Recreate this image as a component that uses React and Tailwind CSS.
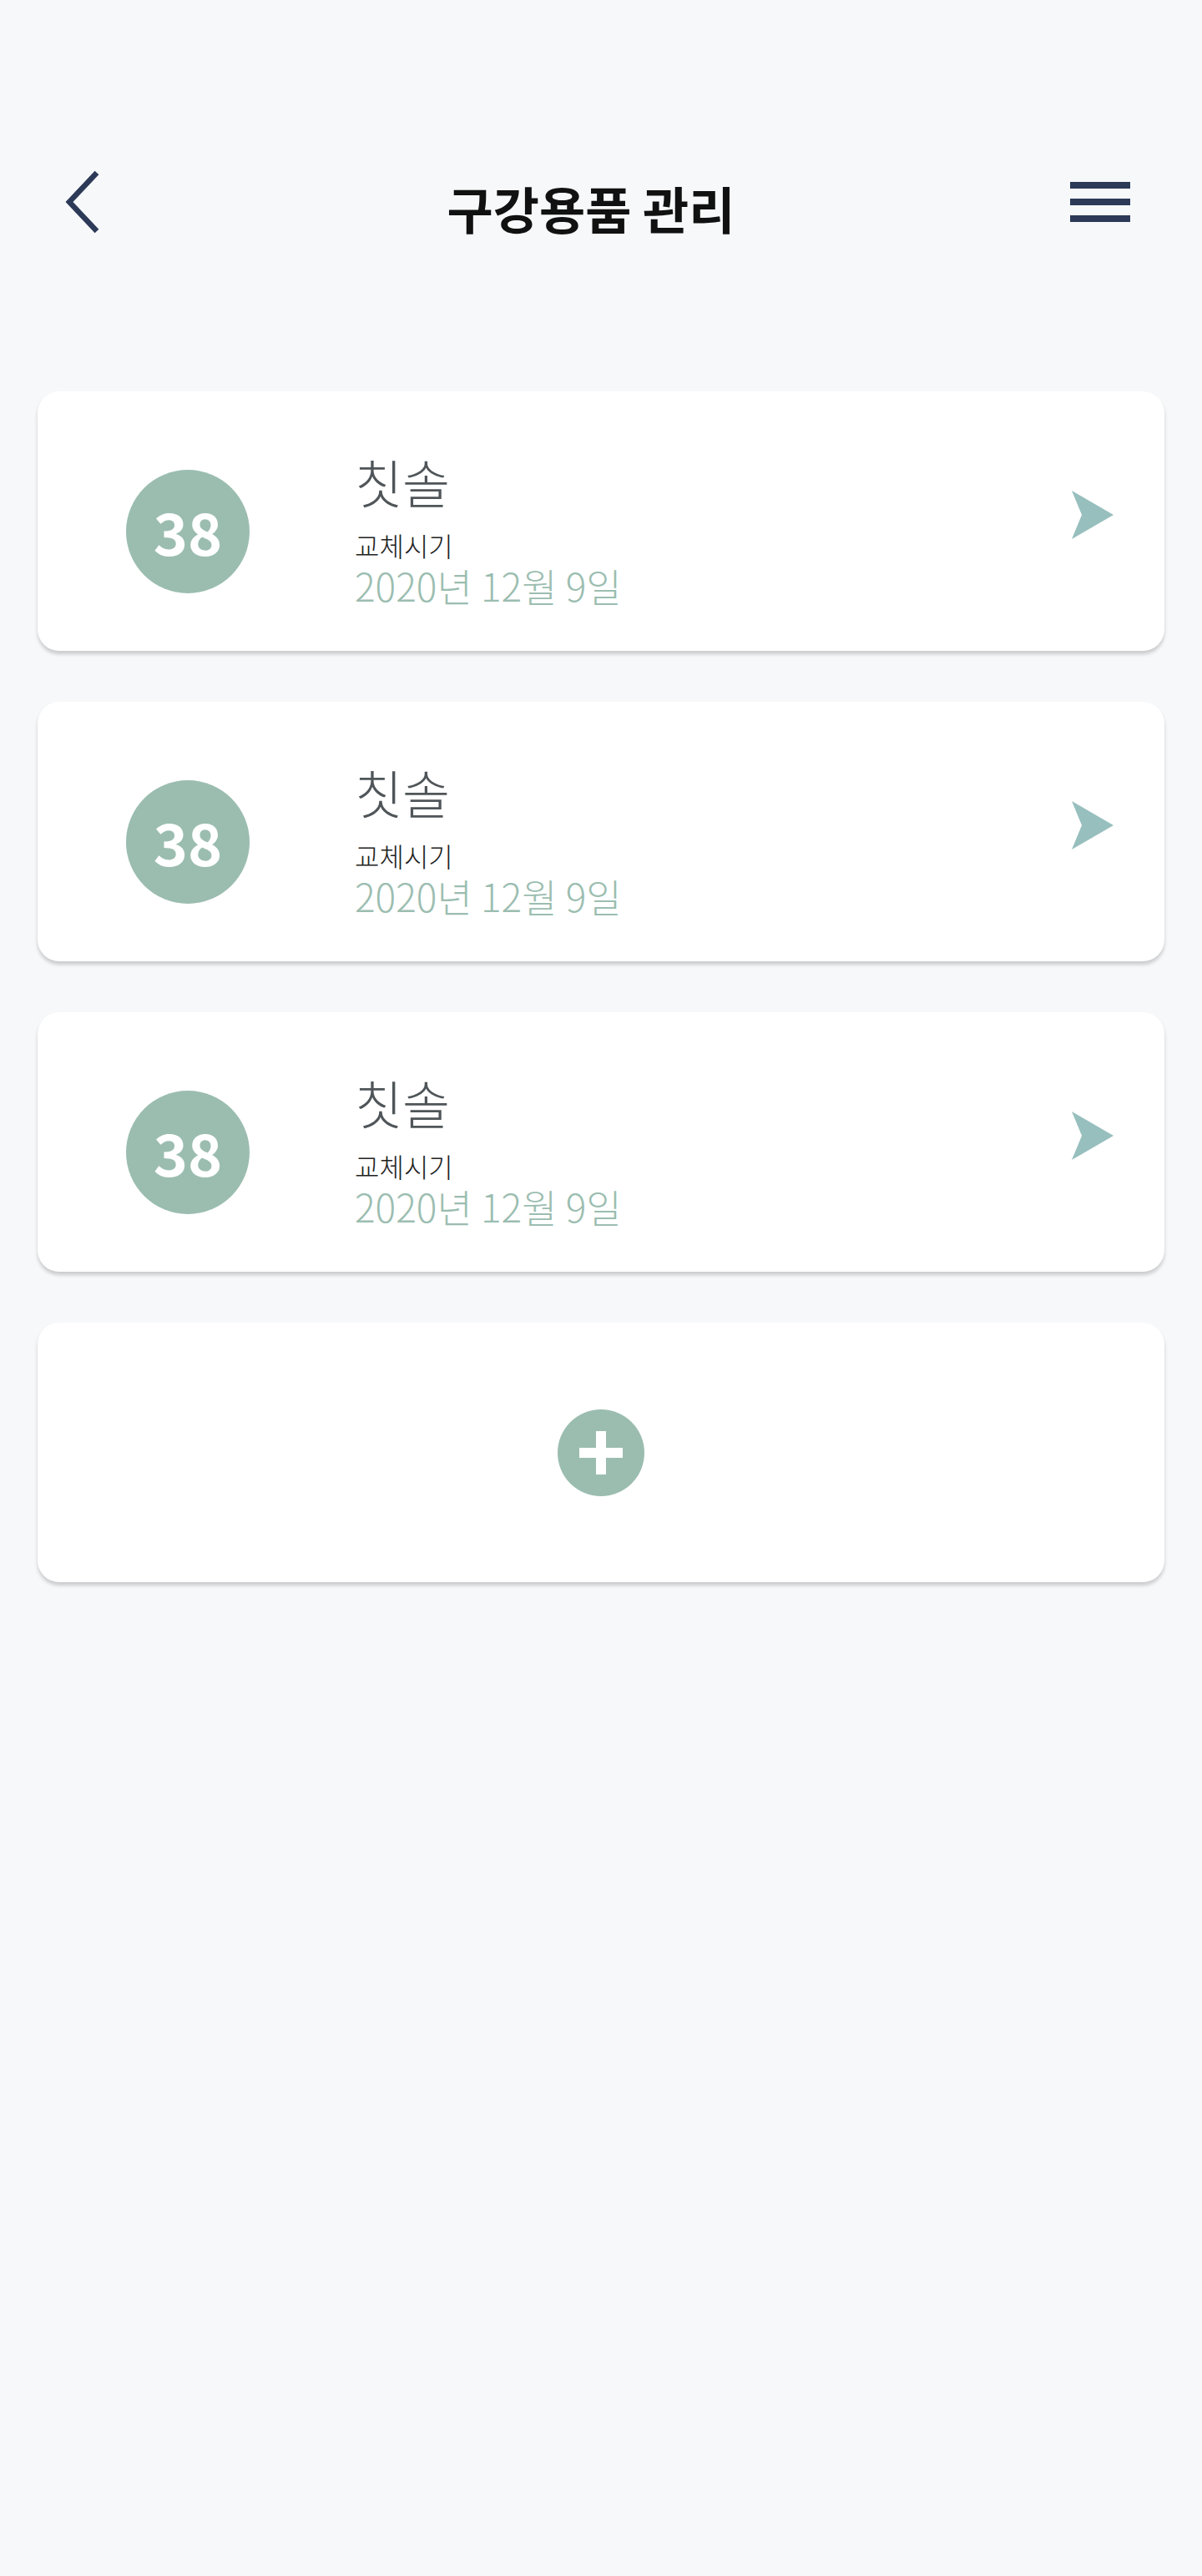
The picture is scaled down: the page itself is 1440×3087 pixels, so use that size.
import { memo } from 'react';

const FONT = { fontFamily: '"Noto Sans CJK KR", "Noto Sans", sans-serif' };

// Back chevron - header left
const BackIcon = () => (
    <svg width="46" height="76" viewBox="0 0 46 76" fill="none">
        <path d="M40 3 L7 38 L40 73" stroke="#2c3a57" strokeWidth="6.5" strokeLinejoin="miter" />
    </svg>
);

// Hamburger - header right
const MenuIcon = () => (
    <svg width="72" height="48" viewBox="0 0 72 48">
        <rect x="0" y="0" width="72" height="8" fill="#2c3a57" />
        <rect x="0" y="20" width="72" height="8" fill="#2c3a57" />
        <rect x="0" y="40" width="72" height="8" fill="#2c3a57" />
    </svg>
);

// Arrow - card right
const ArrowIcon = () => (
    <svg width="50" height="58" viewBox="0 0 50 58">
        <path d="M0 0 L50 29 L0 58 L12 29 Z" fill="#97bfbe" />
    </svg>
);

const ItemCard = memo(({ days, name, label, date }) => (
    <div className="flex items-start h-[311px] bg-white rounded-[26px] shadow-[0_4px_4px_rgba(0,0,0,0.18)]">
        <div className="ml-[106px] mt-[94px] w-[148px] h-[148px] rounded-full bg-[#9bbdb0] flex items-center justify-center">
            <span className="text-white text-[70px] font-semibold leading-none -mt-[2px]">{days}</span>
        </div>
        <div className="ml-[126px] mt-[72px] flex flex-col">
            <span className="text-[62px] leading-[72px] text-[#4f5558] font-light">{name}</span>
            <span className="mt-[22px] text-[32px] leading-[36px] text-[#222] font-light">{label}</span>
            <span className="mt-[4px] text-[46px] leading-[52px] text-[#9bbdb0] font-light">{date}</span>
        </div>
        <div className="ml-auto mr-[61px] mt-[119px]">
            <ArrowIcon />
        </div>
    </div>
));

ItemCard.displayName = 'ItemCard';

const AddCard = () => (
    <div className="flex items-center justify-center h-[311px] bg-white rounded-[26px] shadow-[0_4px_4px_rgba(0,0,0,0.18)]">
        <div className="relative w-[104px] h-[104px] rounded-full bg-[#9bbdb0] flex items-center justify-center">
            <div className="w-[52px] h-[12px] bg-white"></div>
            <div className="absolute w-[12px] h-[52px] bg-white"></div>
        </div>
    </div>
);

const items = [
    { days: 38, name: '칫솔', label: '교체시기', date: '2020년 12월 9일' },
    { days: 38, name: '칫솔', label: '교체시기', date: '2020년 12월 9일' },
    { days: 38, name: '칫솔', label: '교체시기', date: '2020년 12월 9일' },
];

export default function App() {
    return (
        <div className="min-h-[3087px] bg-[#f7f8fa]" style={FONT}>
            {/* Header */}
            <div className="pt-[192px] h-[292px] px-[76px] flex items-center justify-between">
                <BackIcon />
                <h1 className="ml-[12px] text-[60px] font-bold text-[#111] leading-none mt-[14px]">구강용품 관리</h1>
                <div className="mr-[10px]">
                    <MenuIcon />
                </div>
            </div>

            {/* Item list */}
            <div className="mt-[177px] mx-[45px] flex flex-col gap-[61px]">
                {items.map((item, i) => (
                    <ItemCard key={i} {...item} />
                ))}
                <AddCard />
            </div>
        </div>
    );
}
